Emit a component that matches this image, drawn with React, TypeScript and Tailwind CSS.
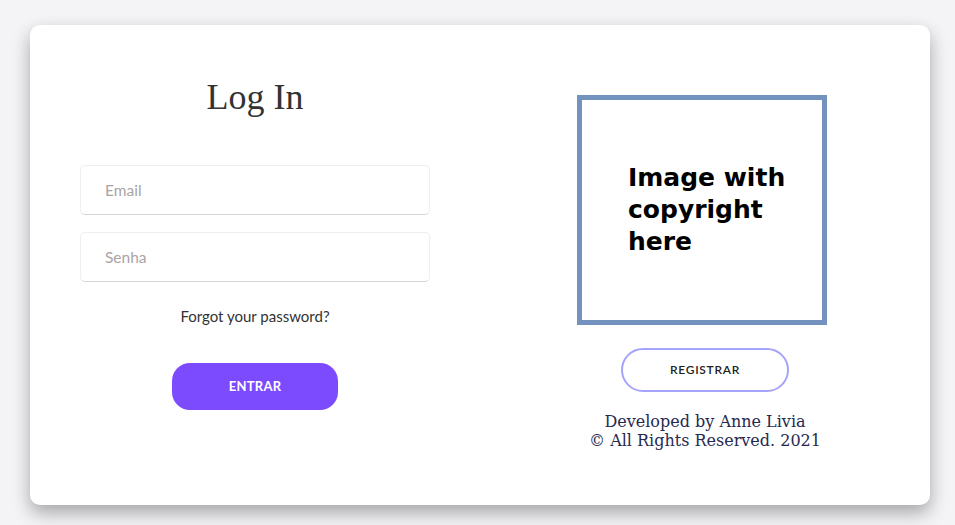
import React, { useState } from 'react';

export default function App() {
  const [email, setEmail] = useState('');
  const [senha, setSenha] = useState('');

  return (
    <div className="min-h-screen w-full bg-[#f4f4f6] pt-[25px] pl-[30px]">
      <div className="grid h-[480px] w-[900px] grid-cols-2 rounded-[10px] bg-white shadow-[0_8px_18px_rgba(0,0,0,0.32)]">
        {/* Login form */}
        <div className="flex flex-col items-center pt-[50px]">
          <h1 className="text-[36px] leading-[44px] text-[#333] [font-family:'Liberation_Serif',serif]">
            Log In
          </h1>

          <input
            type="email"
            placeholder="Email"
            value={email}
            onChange={e => setEmail(e.target.value)}
            className="mt-[46px] h-[50px] w-[350px] rounded-[5px] border border-[#eeeeee] border-b-[#d4d4d4] px-[24px] text-[15.5px] text-[#555] outline-none placeholder:text-[#aaa4a4] [font-family:Lato,sans-serif]"
          />
          <input
            type="password"
            placeholder="Senha"
            value={senha}
            onChange={e => setSenha(e.target.value)}
            className="mt-[17px] h-[50px] w-[350px] rounded-[5px] border border-[#eeeeee] border-b-[#d4d4d4] px-[24px] text-[15.5px] text-[#555] outline-none placeholder:text-[#aaa4a4] [font-family:Lato,sans-serif]"
          />

          <a href="#" className="mt-[24px] text-[15px] leading-[20px] text-[#333] [font-family:Lato,sans-serif]">
            Forgot your password?
          </a>

          <button className="mt-[37px] h-[47px] w-[166px] rounded-[18px] bg-[#7c4bfd] text-[13px] font-bold tracking-[0.02em] text-white [font-family:Lato,sans-serif]">
            ENTRAR
          </button>
        </div>

        {/* Image + register */}
        <div className="flex flex-col items-center pt-[70px]">
          <div className="mr-[6px] flex h-[230px] w-[250px] items-center border-[5px] border-[#7393be] pl-[46px]">
            <p className="text-[25px] font-bold leading-[32px] text-black [font-family:'DejaVu_Sans',sans-serif]">
              Image with
              <br />
              copyright
              <br />
              here
            </p>
          </div>

          <button className="mt-[23px] h-[44px] w-[168px] rounded-full border-2 border-[#a6a3fb] text-[12px] font-semibold tracking-[0.06em] text-[#222] [font-family:Lato,sans-serif]">
            REGISTRAR
          </button>

          <div className="mt-[20px] text-center text-[16px] leading-[19px] text-[#26294f] [font-family:'DejaVu_Serif',serif]">
            <p>Developed by Anne Livia</p>
            <p>© All Rights Reserved. 2021</p>
          </div>
        </div>
      </div>
    </div>
  );
}
